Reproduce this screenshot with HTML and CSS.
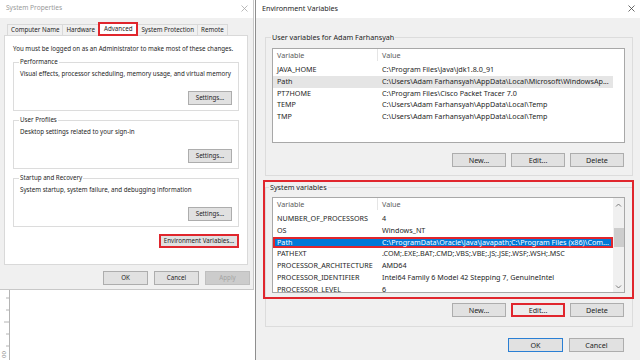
FILE: index.html
```html
<!DOCTYPE html>
<html>
<head>
<meta charset="utf-8">
<title>System Properties - Environment Variables</title>
<link rel="stylesheet" href="styles.css">
</head>
<body>
<div class="screen">
  <div class="left-side">
    <div class="dlg sys-props">
      <div class="titlebar inactive">
        <span>System Properties</span>
        <svg class="close" viewBox="0 0 7 7"><path d="M0.5 0.5L6.5 6.5M6.5 0.5L0.5 6.5"/></svg>
      </div>
      <div class="tabs">
        <span class="tab">Computer Name</span>
        <span class="tab">Hardware</span>
        <span class="tab active">Advanced</span>
        <span class="tab">System Protection</span>
        <span class="tab">Remote</span>
      </div>
      <div class="panel">
        <p class="note">You must be logged on as an Administrator to make most of these changes.</p>
        <div class="group">
          <span class="legend">Performance</span>
          <p class="desc">Visual effects, processor scheduling, memory usage, and virtual memory</p>
          <div class="actions"><button class="btn btn-s">Settings...</button></div>
        </div>
        <div class="group">
          <span class="legend">User Profiles</span>
          <p class="desc">Desktop settings related to your sign-in</p>
          <div class="actions"><button class="btn btn-s">Settings...</button></div>
        </div>
        <div class="group">
          <span class="legend">Startup and Recovery</span>
          <p class="desc">System startup, system failure, and debugging information</p>
          <div class="actions"><button class="btn btn-s">Settings...</button></div>
        </div>
        <div class="actions env-row"><button class="btn btn-env marked">Environment Variables...</button></div>
      </div>
      <div class="dlg-foot">
        <button class="btn btn-d">OK</button>
        <button class="btn btn-d">Cancel</button>
        <button class="btn btn-d disabled">Apply</button>
      </div>
    </div>
    <div class="desk">
      <svg class="ruler" viewBox="0 0 20 70">
        <path d="M9.5 0V70M6 8H9.5M6 20H9.5M4 32H9.5M6 44H9.5M6 56H9.5"/>
        <text x="6" y="68" transform="rotate(-90 6 68)">00</text>
      </svg>
    </div>
  </div>

  <div class="dlg env-vars">
    <div class="titlebar">
      <span>Environment Variables</span>
      <svg class="close" viewBox="0 0 7 7"><path d="M0.5 0.5L6.5 6.5M6.5 0.5L0.5 6.5"/></svg>
    </div>
    <div class="env-body">
      <div class="group user">
        <span class="legend">User variables for Adam Farhansyah</span>
        <div class="list">
          <div class="list-main">
            <div class="list-head"><span class="col-var">Variable</span><span class="col-val">Value</span></div>
            <div class="rows">
              <div class="row"><span class="col-var">JAVA_HOME</span><span class="col-val">C:\Program Files\Java\jdk1.8.0_91</span></div>
              <div class="row hover"><span class="col-var">Path</span><span class="col-val">C:\Users\Adam Farhansyah\AppData\Local\Microsoft\WindowsAp...</span></div>
              <div class="row"><span class="col-var">PT7HOME</span><span class="col-val">C:\Program Files\Cisco Packet Tracer 7.0</span></div>
              <div class="row"><span class="col-var">TEMP</span><span class="col-val">C:\Users\Adam Farhansyah\AppData\Local\Temp</span></div>
              <div class="row"><span class="col-var">TMP</span><span class="col-val">C:\Users\Adam Farhansyah\AppData\Local\Temp</span></div>
            </div>
          </div>
        </div>
        <div class="actions">
          <button class="btn btn-l">New...</button>
          <button class="btn btn-l">Edit...</button>
          <button class="btn btn-l">Delete</button>
        </div>
      </div>

      <div class="group sys">
        <div class="annot">
          <span class="legend">System variables</span>
          <div class="list">
            <div class="list-main">
              <div class="list-head"><span class="col-var">Variable</span><span class="col-val">Value</span></div>
              <div class="rows">
                <div class="row"><span class="col-var">NUMBER_OF_PROCESSORS</span><span class="col-val">4</span></div>
                <div class="row"><span class="col-var">OS</span><span class="col-val">Windows_NT</span></div>
                <div class="row selected"><span class="col-var">Path</span><span class="col-val">C:\ProgramData\Oracle\Java\javapath;C:\Program Files (x86)\Com...</span></div>
                <div class="row"><span class="col-var">PATHEXT</span><span class="col-val">.COM;.EXE;.BAT;.CMD;.VBS;.VBE;.JS;.JSE;.WSF;.WSH;.MSC</span></div>
                <div class="row"><span class="col-var">PROCESSOR_ARCHITECTURE</span><span class="col-val">AMD64</span></div>
                <div class="row"><span class="col-var">PROCESSOR_IDENTIFIER</span><span class="col-val">Intel64 Family 6 Model 42 Stepping 7, GenuineIntel</span></div>
                <div class="row"><span class="col-var">PROCESSOR_LEVEL</span><span class="col-val">6</span></div>
              </div>
            </div>
            <div class="vscroll">
              <svg class="arrow" viewBox="0 0 7 4"><path d="M1 3.5L3.5 1L6 3.5"/></svg>
              <span class="thumb"></span>
              <svg class="arrow down" viewBox="0 0 7 4"><path d="M1 0.5L3.5 3L6 0.5"/></svg>
            </div>
          </div>
        </div>
        <div class="actions">
          <button class="btn btn-l">New...</button>
          <button class="btn btn-l marked light">Edit...</button>
          <button class="btn btn-l">Delete</button>
        </div>
      </div>

      <div class="env-foot">
        <button class="btn btn-ok default">OK</button>
        <button class="btn btn-ok">Cancel</button>
      </div>
    </div>
  </div>
</div>
</body>
</html>
```

FILE: styles.css
```css
* {
	box-sizing:border-box;
}
body {
	margin:0;
	font:7px/10px "Noto Sans", "Liberation Sans", sans-serif;
	color:#1e1e1e;
	background:#fff;
}
p {
	margin:0;
}
.screen {
	display:flex;
	width:640px;
	height:360px;
	overflow:hidden;
}
.left-side {
	flex:none;
	width:255px;
	display:flex;
	flex-direction:column;
}
.dlg {
	background:#f0f0f0;
}

/* title bars */
.titlebar {
	display:flex;
	align-items:center;
	justify-content:space-between;
	height:18px;
	padding:0 5px 2px 6px;
	background:#fff;
	white-space:nowrap;
}
.titlebar .close {
	width:7px;
	height:7px;
	fill:none;
	stroke:#444;
	stroke-width:0.8;
}
.titlebar.inactive {
	color:#999;
	font-size:6.6px;
}
.titlebar.inactive .close {
	stroke:#a8a8a8;
}

/* system properties */
.sys-props {
	width:254px;
	height:290px;
	font-size:6.2px;
	border-right:1px solid #c8c8c8;
	border-bottom:1px solid #c8c8c8;
}
.tabs {
	display:flex;
	align-items:flex-end;
	height:17px;
	padding-left:8px;
	white-space:nowrap;
}
.tab {
	height:11px;
	line-height:10px;
	padding:0 3px;
	margin-left:-1px;
	border:1px solid #d9d9d9;
	border-bottom:0;
	background:#f0f0f0;
}
.tab.active {
	z-index:1;
	height:14px;
	margin-bottom:-1px;
	padding:0 4px;
	border:2px solid #e0262d;
	line-height:10px;
	background:#fff;
}
.panel {
	height:230px;
	margin:0 5px 0 4px;
	padding:8px 8px 0;
	border:1px solid #d9d9d9;
	background:#fff;
}
.group {
	border:1px solid #dcdcdc;
	padding:0 6px;
}
.panel .group {
	height:49px;
	margin-top:9px;
}
.panel .note + .group {
	margin-top:8px;
}
.legend {
	display:block;
	width:max-content;
	margin:-6px 0 0 -1px;
	padding:0 1px;
	background:#fff;
	white-space:nowrap;
}
.note,
.desc {
	white-space:nowrap;
}
.desc {
	margin-top:2px;
}
.actions {
	display:flex;
	justify-content:flex-end;
	gap:5px;
}
.panel .group .actions {
	margin-top:12px;
}
.panel .env-row {
	margin-top:7px;
}
.dlg-foot {
	display:flex;
	justify-content:flex-end;
	gap:6px;
	margin-top:6px;
	padding-right:3px;
}

/* buttons */
.btn {
	height:14px;
	padding:0;
	font:inherit;
	line-height:12px;
	color:#1e1e1e;
	background:#e1e1e1;
	border:1px solid #adadad;
	white-space:nowrap;
}
.btn-s {
	width:44px;
}
.btn-env {
	width:80px;
}
.btn-d {
	width:45px;
}
.btn-l {
	width:54px;
}
.btn-ok {
	width:55px;
}
.btn.marked {
	border:2px solid #e0262d;
	line-height:10px;
}
.btn.light {
	background:#ececec;
}
.btn.disabled {
	color:#a3a3a3;
	background:#cccccc;
	border-color:#bfbfbf;
}
.btn.default {
	border-color:#2a7fd4;
}

/* desktop behind */
.desk {
	flex:1;
	background:#fff;
}
.ruler {
	display:block;
	width:20px;
	height:70px;
	fill:#8a8a8a;
	stroke:#b4b4b4;
	stroke-width:1;
	font:6px "Noto Sans", sans-serif;
}
.ruler text {
	stroke:none;
}

/* environment variables */
.env-vars {
	flex:1;
	font-size:7.2px;
	border-left:1px solid #8e8e8e;
}
.env-body {
	padding:19px 7px 0 9px;
}
.env-body .legend {
	background:#f0f0f0;
}
.group.user {
	padding:0 7px 8px 6px;
}
.group.user .actions {
	margin-top:10px;
	padding-right:1px;
}
.list {
	display:flex;
	height:95px;
	margin-top:6px;
	background:#fff;
	border:1px solid #a8a8a8;
	overflow:hidden;
}
.list-main {
	flex:1;
	min-width:0;
}
.list-head {
	display:flex;
	height:12px;
	line-height:12px;
	color:#5a5a5a;
}
.col-var {
	flex:none;
	width:105px;
	padding-left:4px;
	overflow:hidden;
	white-space:nowrap;
}
.col-val {
	flex:none;
	width:235px;
	padding-left:4px;
	overflow:hidden;
	white-space:nowrap;
}
.list-head .col-var {
	border-right:1px solid #e5e5e5;
}
.rows {
	padding-top:3px;
}
.row {
	display:flex;
	width:340px;
	height:11.75px;
	line-height:11.75px;
}
.row.hover {
	background:#e5e5e5;
}
.row.selected {
	color:#fff;
	background:#0078d7;
	box-shadow:inset 0 0 0 2px #e0262d;
}
.group.sys {
	margin-top:11px;
	padding:0 0 9px;
}
.annot {
	margin:-8px -2px 0 -3px;
	padding:0 7px 4px;
	border:2px solid #e0262d;
}
.annot .legend {
	margin:0 0 0 -3px;
}
.annot .list {
	height:96px;
	margin-top:5px;
}
.group.sys .actions {
	margin-top:4px;
	padding-right:8px;
}
.vscroll {
	flex:none;
	width:11px;
	display:flex;
	flex-direction:column;
	align-items:center;
	background:#f0f0f0;
}
.vscroll .arrow {
	width:7px;
	height:4px;
	margin-top:5px;
	fill:none;
	stroke:#707070;
	stroke-width:0.9;
}
.vscroll .arrow.down {
	margin-top:auto;
	margin-bottom:3px;
}
.vscroll .thumb {
	width:10px;
	height:19px;
	margin-top:21px;
	background:#cdcdcd;
}
.env-foot {
	display:flex;
	justify-content:flex-end;
	gap:6px;
	margin-top:11px;
	padding-right:9px;
}
```
